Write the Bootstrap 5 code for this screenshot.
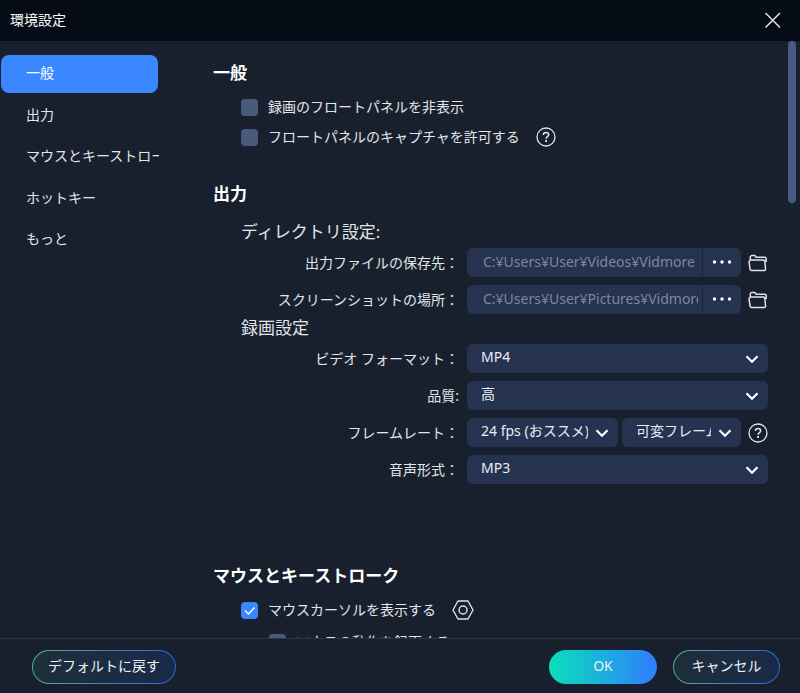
<!DOCTYPE html>
<html lang="ja" data-bs-theme="dark">
<head>
<meta charset="utf-8">
<meta name="viewport" content="width=device-width, initial-scale=1">
<title>環境設定</title>
<link href="https://cdn.jsdelivr.net/npm/bootstrap@5.3.0/dist/css/bootstrap.min.css" rel="stylesheet">
<style>
body{background:#19202d;color:#e2e5ea;font-family:"Noto Sans","Noto Sans CJK JP",sans-serif;font-size:14px;line-height:20px}
.titlebar{background:#050c15;height:41px;padding:0 18px 2px 10px}
.titlebar h1{font-size:14px;line-height:20px}
.icon-btn{background:none;border:0;padding:0;color:#dfe3ea;display:flex}
.side{width:159px;padding:14px 0 0 1px}
.side .nav{height:204px}
.side .nav-link{color:#e2e5ea;height:38px;line-height:36px;padding:0 0 0 25px;border-radius:8px;white-space:nowrap;overflow:hidden}
.side .nav-link.active{background:#3b87ff;color:#fff;margin-right:1px}
.prefs{padding:18px 32px 0 54px;overflow:hidden;min-height:0}
.prefs h2{font-size:17px;line-height:28px;font-weight:700;color:#fff;margin:0 0 5px}
.prefs h3{font-size:17px;line-height:28px;font-weight:400;color:#e2e5ea;margin:0 0 2px}
.prefs .h-wide{margin-bottom:10px}
.group{margin-left:28px}
.opt{height:30px;gap:10px}
.opt.sub{margin:2px 0 0 28px}
.opt .form-check-input{width:17px;height:17px;margin:0;flex:none;background-color:#4a5a7d;border:0;border-radius:4px}
.opt .form-check-input:checked{background-color:#3b87ff;background-image:url("data:image/svg+xml,%3Csvg xmlns='http://www.w3.org/2000/svg' viewBox='0 0 17 17'%3E%3Cpath d='M4 8.500 7.500 12 13.500 5.500' fill='none' stroke='white' stroke-width='1.400'/%3E%3C/svg%3E")}
.opt svg{margin-left:6px}
.rows{display:grid;gap:8px}
.lbl{width:218px;flex:none;text-align:right}
.field{height:29px;background-color:#253350;border:0;border-radius:6px;color:#e9ecf2;font-size:14px;line-height:20px}
.field.form-select{padding:3px 30px 6px 14px;background-size:16px 16px;background-position:right 8px center;background-image:url("data:image/svg+xml,%3Csvg xmlns='http://www.w3.org/2000/svg' viewBox='0 0 16 16'%3E%3Cpath d='M2.500 5.200 8 10.800l5.500-5.600' fill='none' stroke='white' stroke-width='2.200'/%3E%3C/svg%3E")}
.path .field{color:#7e889c;padding:3px 4px 6px 16px;min-width:0}
.dots{flex:none;width:39px;height:29px;background:#253350;border:0;border-left:1px solid #19233a;border-radius:0 6px 6px 0;color:#fff;padding:0 0 2px;display:flex;align-items:center;justify-content:center}
.path,.rates{padding-right:27px;position:relative;min-width:0}
.path .icon-btn,.rates .icon-btn{position:absolute;right:0;top:5px}
.rates{gap:4px}
.rates .field:first-child{flex:107 1 0;width:0}
.rates .field:nth-child(2){flex:75 1 0;width:0}
.gap-a{margin-top:28px}
.gap-b{margin-top:78px}
.thumb{position:absolute;right:4px;top:0;width:8px;height:162px;border-radius:4px;background:#495b82}
.foot{border-top:1px solid #293450;padding:11px 20px 9px 32px}
.pill{height:34px;border-radius:17px;border:1px solid transparent;color:#eef1f5;font-size:14px;line-height:20px;padding:0 15px 2px}
.pill.line{background:linear-gradient(90deg,#1d2f3a,#192a49) padding-box,linear-gradient(90deg,#4fae92,#2b68d0) border-box}
.pill.full{background:linear-gradient(90deg,#09e0bb,#2f7dff) border-box;border:0;width:108px}
.pill.cancel{width:107px}
</style>
</head>
<body class="d-flex flex-column vh-100 overflow-hidden">
<header class="titlebar d-flex flex-shrink-0 align-items-center justify-content-between">
  <h1 class="m-0 fw-normal">環境設定</h1>
  <button type="button" class="icon-btn" aria-label="閉じる"><svg width="18" height="18" viewBox="0 0 18 18" fill="none" stroke="currentColor" stroke-width="1.500"><path d="M1.500 2 16 16.500M16 2 1.500 16.500"/></svg></button>
</header>
<div class="d-flex flex-grow-1 position-relative overflow-hidden">
  <nav class="side flex-shrink-0">
    <div class="nav nav-pills flex-column flex-nowrap justify-content-between">
      <a class="nav-link active" href="#general">一般</a>
      <a class="nav-link" href="#output">出力</a>
      <a class="nav-link" href="#mouse">マウスとキーストローク</a>
      <a class="nav-link" href="#hotkey">ホットキー</a>
      <a class="nav-link" href="#more">もっと</a>
    </div>
  </nav>
  <main class="prefs flex-grow-1">
    <section id="general">
      <h2>一般</h2>
      <div class="group">
        <div class="opt d-flex align-items-center"><input class="form-check-input" type="checkbox" id="c1"><label for="c1">録画のフロートパネルを非表示</label></div>
        <div class="opt d-flex align-items-center"><input class="form-check-input" type="checkbox" id="c2"><label for="c2">フロートパネルのキャプチャを許可する</label>
          <button type="button" class="icon-btn" aria-label="ヘルプ"><svg width="20" height="20" viewBox="0 0 20 20" fill="none" stroke="currentColor"><circle cx="10" cy="10" r="9" stroke-width="1.300"/><path d="M7.300 8C7.300 6.300 8.400 5.400 10 5.400s2.700.9 2.700 2.300c0 1.900-2.600 2-2.600 4.100" stroke-width="1.500"/><path d="M9.200 14h1.800" stroke-width="1.800"/></svg></button></div>
      </div>
    </section>
    <section id="output" class="gap-a">
      <h2 class="h-wide">出力</h2>
      <div class="group">
        <h3>ディレクトリ設定:</h3>
        <div class="rows">
          <div class="d-flex align-items-center gap-2"><label class="lbl" for="p1">出力ファイルの保存先：</label>
            <div class="path d-flex flex-grow-1"><input class="form-control field rounded-end-0" id="p1" value="C:¥Users¥User¥Videos¥Vidmore"><button type="button" class="dots" aria-label="参照"><svg width="20" height="4" viewBox="0 0 20 4" fill="currentColor"><circle cx="2.500" cy="2" r="1.700"/><circle cx="10" cy="2" r="1.700"/><circle cx="17.500" cy="2" r="1.700"/></svg></button>
              <button type="button" class="icon-btn" aria-label="フォルダを開く"><svg width="20" height="20" viewBox="0 0 20 20" fill="none" stroke="currentColor" stroke-width="1.500" stroke-linejoin="round"><path d="M2.300 7V3.500L3.500 2.500h3.300l1.400 1.800h9l1 1V9M1 8.600 2.200 7h13.600l1 1.200.8 8.300-1 1H3.200l-1-.8z"/></svg></button></div></div>
          <div class="d-flex align-items-center gap-2"><label class="lbl" for="p2">スクリーンショットの場所：</label>
            <div class="path d-flex flex-grow-1"><input class="form-control field rounded-end-0" id="p2" value="C:¥Users¥User¥Pictures¥Vidmore"><button type="button" class="dots" aria-label="参照"><svg width="20" height="4" viewBox="0 0 20 4" fill="currentColor"><circle cx="2.500" cy="2" r="1.700"/><circle cx="10" cy="2" r="1.700"/><circle cx="17.500" cy="2" r="1.700"/></svg></button>
              <button type="button" class="icon-btn" aria-label="フォルダを開く"><svg width="20" height="20" viewBox="0 0 20 20" fill="none" stroke="currentColor" stroke-width="1.500" stroke-linejoin="round"><path d="M2.300 7V3.500L3.500 2.500h3.300l1.400 1.800h9l1 1V9M1 8.600 2.200 7h13.600l1 1.200.8 8.300-1 1H3.200l-1-.8z"/></svg></button></div></div>
        </div>
        <h3>録画設定</h3>
        <div class="rows">
          <div class="d-flex align-items-center gap-2"><label class="lbl" for="s1">ビデオ フォーマット：</label><select class="form-select field" id="s1"><option>MP4</option></select></div>
          <div class="d-flex align-items-center gap-2"><label class="lbl" for="s2">品質:</label><select class="form-select field" id="s2"><option>高</option></select></div>
          <div class="d-flex align-items-center gap-2"><label class="lbl" for="s3">フレームレート：</label>
            <div class="rates d-flex flex-grow-1"><select class="form-select field" id="s3"><option>24 fps (おススメ)</option></select><select class="form-select field" aria-label="フレームレートの種類"><option>可変フレームレート</option></select>
              <button type="button" class="icon-btn" aria-label="ヘルプ"><svg width="20" height="20" viewBox="0 0 20 20" fill="none" stroke="currentColor"><circle cx="10" cy="10" r="9" stroke-width="1.300"/><path d="M7.300 8C7.300 6.300 8.400 5.400 10 5.400s2.700.9 2.700 2.300c0 1.900-2.600 2-2.600 4.100" stroke-width="1.500"/><path d="M9.200 14h1.800" stroke-width="1.800"/></svg></button></div></div>
          <div class="d-flex align-items-center gap-2"><label class="lbl" for="s4">音声形式：</label><select class="form-select field" id="s4"><option>MP3</option></select></div>
        </div>
      </div>
    </section>
    <section id="mouse" class="gap-b">
      <h2>マウスとキーストローク</h2>
      <div class="group">
        <div class="opt d-flex align-items-center"><input class="form-check-input" type="checkbox" id="c3" checked><label for="c3">マウスカーソルを表示する</label>
          <button type="button" class="icon-btn" aria-label="設定"><svg width="22" height="20" viewBox="0 0 22 20" fill="none" stroke="currentColor" stroke-width="1.400" stroke-linejoin="round"><path d="M6 1h10l5 9-5 9H6l-5-9z"/><circle cx="11" cy="10" r="4"/></svg></button></div>
        <div class="opt sub d-flex align-items-center"><input class="form-check-input" type="checkbox" id="c4"><label for="c4">マウスの動作を録画する</label></div>
      </div>
    </section>
  </main>
  <div class="thumb"></div>
</div>
<footer class="foot d-flex flex-shrink-0 align-items-center">
  <button type="button" class="pill line me-auto">デフォルトに戻す</button>
  <button type="button" class="pill full me-3">OK</button>
  <button type="button" class="pill line cancel">キャンセル</button>
</footer>
<script src="https://cdn.jsdelivr.net/npm/bootstrap@5.3.0/dist/js/bootstrap.bundle.min.js"></script>
</body>
</html>
